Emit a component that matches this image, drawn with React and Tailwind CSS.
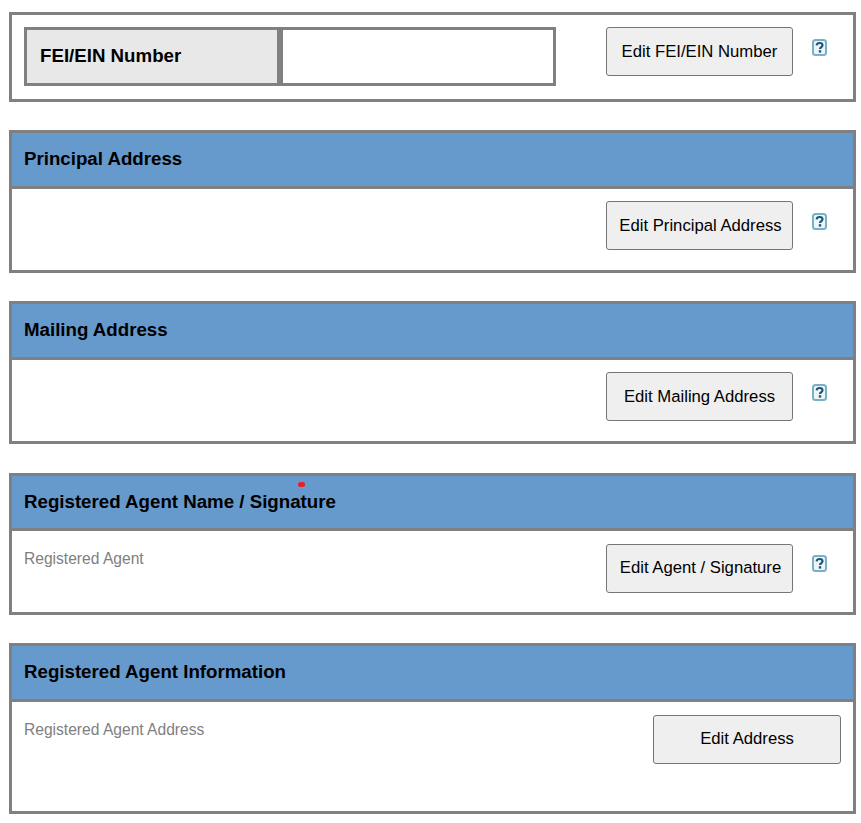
const font = { fontFamily: '"Liberation Sans", Arial, sans-serif' };

function HelpIcon() {
  return (
    <svg width="15" height="17" viewBox="0 0 15 17" className="block">
      <rect x="1" y="1" width="13" height="15" rx="2.5" fill="#eef5f8" stroke="#78b0c6" strokeWidth="2" />
      <path d="M4.6 6.4c.2-1.5 1.4-2.4 3-2.4 1.7 0 2.9.9 2.9 2.3 0 1.2-.8 1.7-1.5 2.2-.7.4-1 .8-1 1.6" fill="none" stroke="#1c5675" strokeWidth="2.2" />
      <rect x="6.8" y="11.2" width="2.4" height="2.4" fill="#1c5675" />
    </svg>
  );
}

function EditButton({ children, className }) {
  return (
    <button className={`h-[49px] bg-[#efefef] border border-[#767676] rounded-[3px] text-[16.7px] text-black ${className}`}>
      {children}
    </button>
  );
}

function Section({ title, label, button, height, mb, headerH = 'h-[53px]', headerPb = 'pb-[1px]', bodyPt = 'pt-3', btnClass = '', helpMt = 'mt-[12px]', dot }) {
  return (
    <section className={`relative border-[3px] border-[#808080] flex flex-col ${height} ${mb}`}>
      <h2 className={`${headerH} ${headerPb} bg-[#6699cc] flex items-center pl-3 text-[18.7px] font-bold text-black`}>{title}</h2>
      <div className="h-[3px] bg-[#808080]"></div>
      <div className={`flex flex-1 items-start pl-3 ${bodyPt}`}>
        <div className="w-[582px] mt-[3px] text-[15.6px] text-[#808080]">{label}</div>
        <EditButton className={`w-[187px] ${btnClass}`}>{button}</EditButton>
        <div className={`ml-[19px] ${helpMt}`}><HelpIcon /></div>
      </div>
      {dot && <span className="absolute left-[286px] top-[6px] w-[7px] h-[5px] rounded-full bg-[#ee1c25]"></span>}
    </section>
  );
}

export default function App() {
  return (
    <div style={font} className="w-[861px] h-[823px] bg-white pt-3 pl-[9px] overflow-hidden">
      <div className="w-[847px] h-[90px] border-[3px] border-[#808080] mb-[28px] flex items-start pl-3 pt-3">
        <div className="w-[532px] h-[59px] border-[3px] border-[#808080] flex">
          <div className="w-[256px] bg-[#e8e8e8] border-r-[6px] border-[#808080] flex items-center pl-[13px] pb-[1px] text-[18.7px] font-bold text-black">FEI/EIN Number</div>
          <div className="flex-1"></div>
        </div>
        <EditButton className="w-[187px] ml-[50px]">Edit FEI/EIN Number</EditButton>
        <div className="ml-[19px] mt-[12px]"><HelpIcon /></div>
      </div>

      <div className="w-[847px]">
        <Section title="Principal Address" button="Edit Principal Address" height="h-[143px]" mb="mb-[28px]" btnClass="pl-[2px]" />
        <Section title="Mailing Address" button="Edit Mailing Address" height="h-[143px]" mb="mb-[29px]" />
        <Section title="Registered Agent Name / Signature" label="Registered Agent" button="Edit Agent / Signature" height="h-[142px]" mb="mb-[28px]" headerH="h-[52px]" headerPb="pb-0" bodyPt="pt-[13px]" btnClass="pb-[2px] pl-[2px]" helpMt="mt-[11px]" dot />

        <section className="border-[3px] border-[#808080] h-[171px] flex flex-col">
          <h2 className="h-[53px] bg-[#6699cc] flex items-center pl-3 text-[18.7px] font-bold text-black">Registered Agent Information</h2>
          <div className="h-[3px] bg-[#808080]"></div>
          <div className="flex flex-1 items-start justify-between pl-3 pr-3 pt-[13px]">
            <div className="mt-[3px] text-[15.6px] text-[#808080]">Registered Agent Address</div>
            <EditButton className="w-[188px] pb-[2px]">Edit Address</EditButton>
          </div>
        </section>
      </div>
    </div>
  );
}
